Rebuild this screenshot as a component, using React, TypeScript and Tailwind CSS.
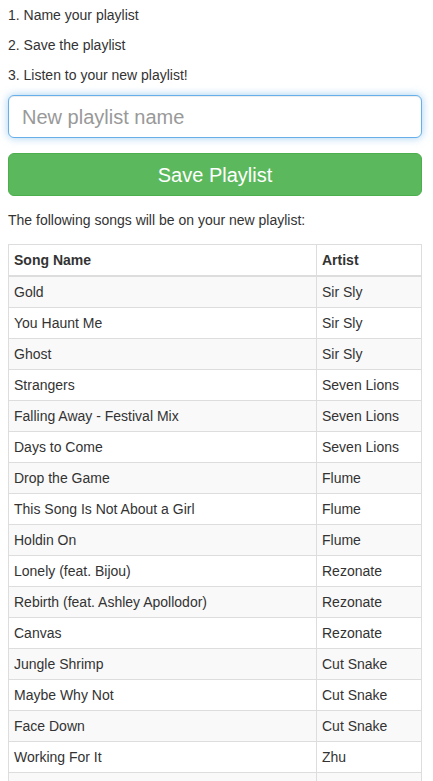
const songs = [
  { name: "Gold", artist: "Sir Sly" },
  { name: "You Haunt Me", artist: "Sir Sly" },
  { name: "Ghost", artist: "Sir Sly" },
  { name: "Strangers", artist: "Seven Lions" },
  { name: "Falling Away - Festival Mix", artist: "Seven Lions" },
  { name: "Days to Come", artist: "Seven Lions" },
  { name: "Drop the Game", artist: "Flume" },
  { name: "This Song Is Not About a Girl", artist: "Flume" },
  { name: "Holdin On", artist: "Flume" },
  { name: "Lonely (feat. Bijou)", artist: "Rezonate" },
  { name: "Rebirth (feat. Ashley Apollodor)", artist: "Rezonate" },
  { name: "Canvas", artist: "Rezonate" },
  { name: "Jungle Shrimp", artist: "Cut Snake" },
  { name: "Maybe Why Not", artist: "Cut Snake" },
  { name: "Face Down", artist: "Cut Snake" },
  { name: "Working For It", artist: "Zhu" },
];

const App = () => {
  return (
    <div className="min-h-screen bg-white pl-2 pr-[11px] pt-[5px] font-['Liberation_Sans',Arial,sans-serif] text-[14px] leading-[20px] text-[#333]">
      {/* Steps */}
      <p className="mb-[10px]">1. Name your playlist</p>
      <p className="mb-[10px]">2. Save the playlist</p>
      <p className="mb-[10px]">3. Listen to your new playlist!</p>

      {/* Form */}
      <input
        type="text"
        placeholder="New playlist name"
        className="block h-[43px] w-full rounded-[6px] border border-[#66afe9] bg-white pl-[13px] pr-4 pt-[1px] text-[20px] text-[#555] outline-none shadow-[inset_0_1px_1px_rgba(0,0,0,0.075),0_0_8px_rgba(102,175,233,0.6)] placeholder:text-[#999]"
      />
      <button className="mt-[15px] block h-[43px] w-full rounded-[6px] border border-[#4cae4c] bg-[#5cb85c] pt-[1px] text-[20px] text-white">
        Save Playlist
      </button>

      <p className="mt-[14px] mb-[14px]">The following songs will be on your new playlist:</p>

      {/* Songs */}
      <table className="w-full border-collapse border border-[#ddd]">
        <thead>
          <tr>
            <th className="w-[308px] border border-b-2 border-[#ddd] px-[5px] py-[5px] text-left font-bold">Song Name</th>
            <th className="border border-b-2 border-[#ddd] px-[5px] py-[5px] text-left font-bold">Artist</th>
          </tr>
        </thead>
        <tbody>
          {songs.map((song, index) => (
            <tr key={index} className={index % 2 === 0 ? "bg-[#f9f9f9]" : "bg-white"}>
              <td className="border border-[#ddd] px-[5px] py-[5px]">{song.name}</td>
              <td className="border border-[#ddd] px-[5px] py-[5px]">{song.artist}</td>
            </tr>
          ))}
          <tr className="bg-[#f9f9f9]">
            <td className="h-[31px] border border-[#ddd]"></td>
            <td className="h-[31px] border border-[#ddd]"></td>
          </tr>
        </tbody>
      </table>
    </div>
  );
};

export default App;
